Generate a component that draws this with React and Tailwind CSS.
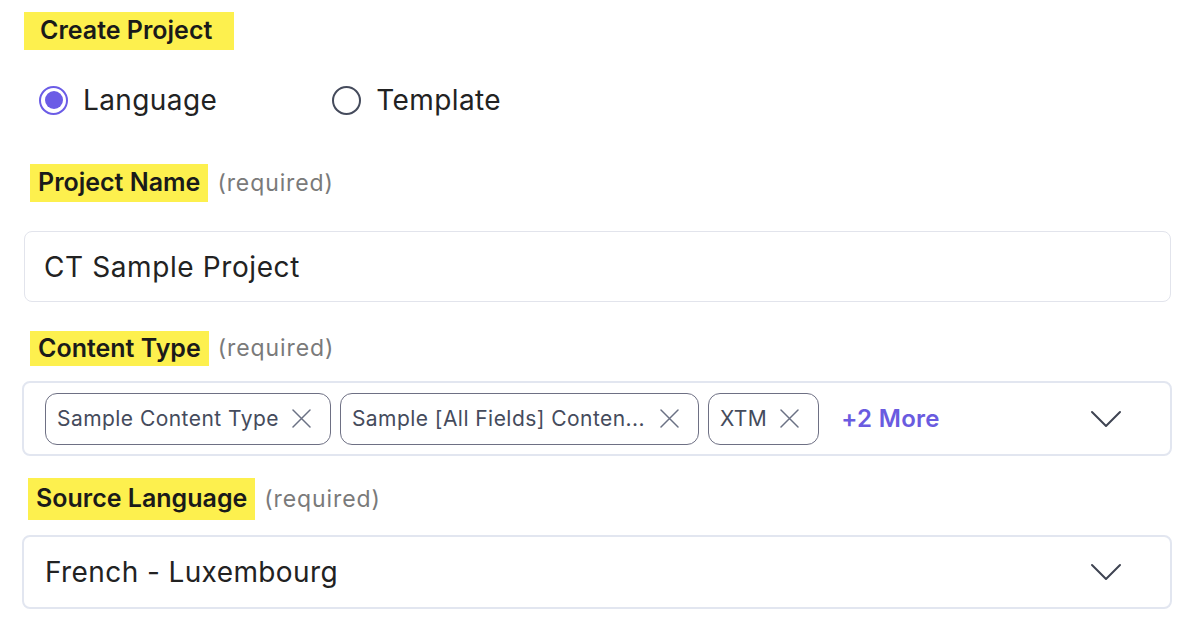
import React from 'react'

const font = { fontFamily: 'Inter, "Noto Sans", sans-serif' }

function Label({ children, required, className = '' }) {
  return (
    <div className={`flex items-center ${className}`}>
      <span className="bg-[#fdf04e] px-[8px] h-full flex items-center text-[25px] font-semibold text-[#1a1a1a] tracking-[0px]">
        {children}
      </span>
      {required && <span className="ml-[9px] text-[23px] text-[#7a7a7a] tracking-[0.9px]">(required)</span>}
    </div>
  )
}

function Chevron() {
  return (
    <svg width="32" height="18" viewBox="0 0 32 18" fill="none" className="shrink-0">
      <path d="M2 2 L16 16 L30 2" stroke="#3f4452" strokeWidth="2" strokeLinecap="round" strokeLinejoin="round"/>
    </svg>
  )
}

function XIcon() {
  return (
    <svg width="19" height="19" viewBox="0 0 19 19" fill="none" className="shrink-0">
      <path d="M1 1 L18 18 M18 1 L1 18" stroke="#6b7184" strokeWidth="1.5" strokeLinecap="round"/>
    </svg>
  )
}

function Chip({ label, width = '' }) {
  return (
    <div className={`h-[52px] ${width} shrink-0 flex items-center justify-between gap-[13px] pl-[11px] pr-[19px] rounded-[12px] border border-[#6e7084] text-[21px] text-[#454b5c] tracking-[0.45px]`}>
      <span className="truncate">{label}</span>
      <XIcon/>
    </div>
  )
}

function Radio({ checked, label }) {
  return (
    <label className="flex items-center gap-[15px]">
      {checked ? (
        <span className="w-[29px] h-[29px] rounded-full border-[2.5px] border-[#6b5ce6] flex items-center justify-center">
          <span className="w-[18px] h-[18px] rounded-full bg-[#6b5ce6]"/>
        </span>
      ) : (
        <span className="w-[29px] h-[29px] rounded-full border-[2px] border-[#454b5c]"/>
      )}
      <span className="text-[28px] text-[#222] tracking-[0.4px]">{label}</span>
    </label>
  )
}

export default function App() {
  return (
    <div className="w-[1200px] h-[630px] bg-white overflow-hidden" style={font}>
      <div className="pt-[12px]">
        <div className="pl-[24px]">
          <span className="inline-flex bg-[#fdf04e] pl-[16px] pr-[22px] h-[38px] items-center text-[25px] font-semibold text-[#1a1a1a]">
            Create Project
          </span>
        </div>

        <div className="flex items-center pl-[39px] mt-[36px] gap-[115px] h-[28px]">
          <Radio checked label="Language"/>
          <Radio label="Template"/>
        </div>

        <Label required className="pl-[30px] mt-[50px] h-[38px]">Project Name</Label>

        <div className="mx-[24px] w-[1147px] mt-[29px] h-[71px] rounded-[8px] border border-[#e2e4ec] flex items-center pl-[19px] text-[28px] text-[#222] tracking-[0.6px]">
          CT Sample Project
        </div>

        <Label required className="pl-[30px] mt-[29px] h-[35px]">Content Type</Label>

        <div className="ml-[22px] w-[1150px] mt-[15px] h-[75px] rounded-[8px] border-2 border-[#e2e6f0] flex items-center pl-[21px] pr-[48px]">
          <div className="flex items-center gap-[9px]">
            <Chip label="Sample Content Type"/>
            <Chip label="Sample [All Fields] Conten..." width="w-[359px]"/>
            <Chip label="XTM"/>
            <span className="ml-[13px] text-[24px] font-semibold text-[#6a5be0] tracking-[0.3px]">+2 More</span>
          </div>
          <div className="ml-auto"><Chevron/></div>
        </div>

        <Label required className="pl-[28px] mt-[22px] h-[42px]">Source Language</Label>

        <div className="ml-[22px] w-[1150px] mt-[15px] h-[74px] rounded-[8px] border-2 border-[#e2e6f0] flex items-center pl-[21px] pr-[48px]">
          <span className="text-[28px] text-[#222] tracking-[0.4px]">French - Luxembourg</span>
          <div className="ml-auto"><Chevron/></div>
        </div>
      </div>
    </div>
  )
}
